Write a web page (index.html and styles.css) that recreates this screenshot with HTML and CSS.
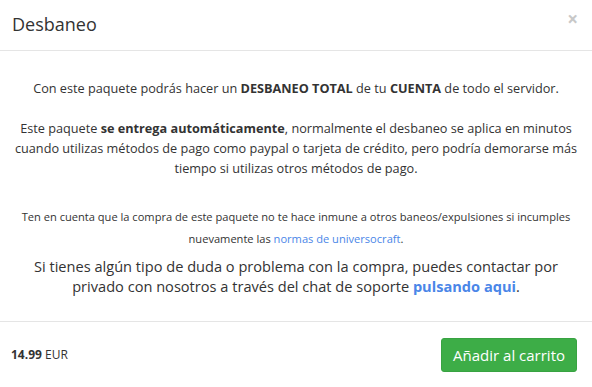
FILE: index.html
```html
<!DOCTYPE html>
<html lang="es">
<head>
<meta charset="utf-8">
<title>Desbaneo</title>
<link rel="stylesheet" href="styles.css">
</head>
<body>
<div class="modal">
  <div class="modal-header">
    <h4 class="modal-title">Desbaneo</h4>
    <button class="close" type="button" aria-label="Cerrar">&times;</button>
  </div>
  <div class="modal-body">
    <p>Con este paquete podrás hacer un <b>DESBANEO TOTAL</b> de tu <b>CUENTA</b> de todo el servidor.</p>
    <p>Este paquete <b>se entrega automáticamente</b>, normalmente el desbaneo se aplica en minutos cuando utilizas métodos de pago como paypal o tarjeta de crédito, pero podría demorarse más tiempo si utilizas otros métodos de pago.</p>
    <p class="small">Ten en cuenta que la compra de este paquete no te hace inmune a otros baneos/expulsiones si incumples nuevamente las <a href="#">normas de universocraft</a>.</p>
    <p class="big">Si tienes algún tipo de duda o problema con la compra, puedes contactar por privado con nosotros a través del chat de soporte <a href="#"><b>pulsando aqui</b></a>.</p>
  </div>
  <div class="modal-footer">
    <div class="price"><b>14.99</b> EUR</div>
    <button class="btn" type="button">Añadir al carrito</button>
  </div>
</div>
</body>
</html>
```
FILE: styles.css
```css
* { box-sizing: border-box; }
html, body { margin: 0; padding: 0; background: #fff; }
body {
  font-family: "Open Sans", "Noto Sans", sans-serif;
  color: #333;
  font-size: 12.7px;
  line-height: 20px;
}
.modal { width: 592px; height: 387px; display: flex; flex-direction: column; }
.modal-header {
  display: flex;
  align-items: flex-start;
  justify-content: space-between;
  padding: 12px 14px 13px 12px;
  border-bottom: 1px solid #e5e5e5;
  height: 51px;
}
.modal-title { margin: 0; font-size: 18px; font-weight: 400; line-height: 25px; }
.close {
  border: 0; background: none; padding: 0; margin: 0;
  font-family: "Open Sans", sans-serif;
  font-size: 19px; font-weight: 700; line-height: 14px;
  color: #c8c8c8; cursor: pointer;
}
.modal-body { flex: 1; padding: 27px 10px 0; text-align: center; }
.modal-body p { margin: 0 0 20px; }
.modal-body p.small { font-size: 11.1px; line-height: 22px; margin: 0 0 6px; padding-top: 8px; }
.modal-body p.big { font-size: 14.6px; line-height: 20px; margin: 0; }
a { color: #4a86e8; text-decoration: none; }
.modal-footer {
  border-top: 1px solid #e5e5e5;
  height: 66px;
  display: flex; align-items: center; justify-content: space-between;
  padding: 0 15px 0 11px;
  flex: 0 0 auto;
}
.price { font-size: 12px; }
.btn {
  background: #3dad47; border: 1px solid #38a342; border-radius: 3px;
  color: #fff; font-family: "Open Sans", sans-serif; font-size: 15px;
  height: 34px; padding: 0 11px; line-height: 32px;
}
```
